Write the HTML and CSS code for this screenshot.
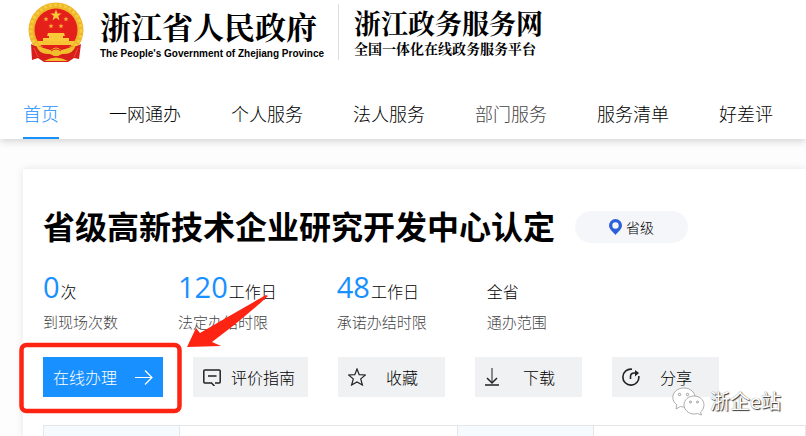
FILE: index.html
```
<!DOCTYPE html>
<html lang="zh-CN">
<head>
    <meta charset="utf-8">
    <title>浙江政务服务网</title>
    <link rel="stylesheet" href="styles.css">
</head>
<body>
    <header class="header">
        <div class="brand">
            <svg class="emblem" viewBox="0 0 56 60" aria-hidden="true">
                <circle cx="28" cy="28" r="27.5" fill="#eeb62a"/>
                <circle cx="28" cy="28" r="25" fill="none" stroke="#f6cb3c" stroke-width="3" stroke-dasharray="3 2"/>
                <circle cx="28" cy="28" r="21.5" fill="#e5201b"/>
                <path d="M28 7.500l1.500 4h4l-3.200 2.600 1.200 4.200-3.500-2.500-3.500 2.500 1.200-4.200-3.200-2.600h4z" fill="#f9c93a"/>
                <path id="star" d="M18 14.500l.7 1.700h1.800l-1.400 1.200.5 1.800-1.600-1-1.600 1 .5-1.800-1.400-1.200h1.800z" fill="#f5b433"/>
                <use href="#star" x="20"/>
                <use href="#star" x="5" y="7"/>
                <use href="#star" x="15" y="7"/>
                <path d="M20 31h16l1 3h-2v2h6v3H15v-3h6v-2h-2z" fill="#f9c93a"/>
                <path d="M9 39h38l-2 4H11z" fill="#f7c436"/>
                <path d="M3 42l4 2 10 1 11 3 11-3 10-1 4-2-2 15-5-1-6 4H16l-6-4-6 2z" fill="#d81e1b"/>
                <path d="M6 46l4 9M50 46l-4 9" stroke="#f04a38" stroke-width="1" fill="none"/>
                <path d="M8 43q9 4 15 5 5-5 10 0 6-1 15-5-3 10-14 9l-4 2h-4l-4-2q-11 1-14-9z" fill="#f2bd2c"/>
                <path d="M23 49q5-4 10 0" stroke="#d81e1b" stroke-width="1" fill="none"/>
                <path d="M16 59q12-7 24 0z" fill="#f2bd2c"/>
            </svg>
            <div class="gov">
                <span class="gov-name">浙江省人民政府</span>
                <span class="gov-en">The People's Government of Zhejiang Province</span>
            </div>
            <div class="site">
                <span class="site-name">浙江政务服务网</span>
                <span class="site-sub">全国一体化在线政务服务平台</span>
            </div>
        </div>
        <nav class="nav">
            <a href="#" class="active">首页</a>
            <a href="#">一网通办</a>
            <a href="#">个人服务</a>
            <a href="#">法人服务</a>
            <a href="#" class="hover">部门服务</a>
            <a href="#">服务清单</a>
            <a href="#">好差评</a>
        </nav>
    </header>

    <main class="card">
        <div class="title-row">
            <h1>省级高新技术企业研究开发中心认定</h1>
            <span class="level">
                <svg width="13" height="16" viewBox="0 0 13 16" aria-hidden="true">
                    <path d="M6.500 0A6.500 6.500 0 0 0 0 6.500C0 10 4 13 6.500 16 9 13 13 10 13 6.500A6.500 6.500 0 0 0 6.500 0zm0 3.300a3.200 3.200 0 1 1 0 6.400 3.200 3.200 0 0 1 0-6.400z" fill="#2b5fdc"/>
                </svg>
                省级
            </span>
        </div>

        <div class="stats">
            <div class="stat">
                <div class="value"><b>0</b>次</div>
                <div class="label">到现场次数</div>
            </div>
            <div class="stat">
                <div class="value"><b>120</b>工作日</div>
                <div class="label">法定办结时限</div>
            </div>
            <div class="stat">
                <div class="value"><b>48</b>工作日</div>
                <div class="label">承诺办结时限</div>
            </div>
            <div class="stat">
                <div class="value">全省</div>
                <div class="label">通办范围</div>
            </div>
        </div>

        <div class="actions">
            <button type="button" class="btn primary">
                在线办理
                <svg width="18" height="18" viewBox="0 0 18 18" aria-hidden="true"><path d="M0 9.500h17M10 2.500l7 7-7 7"/></svg>
            </button>
            <button type="button" class="btn guide">
                <svg width="18" height="18" viewBox="0 0 18 18" aria-hidden="true"><path d="M8 15H1.800q-1 0-1-1V3q0-1 1-1h14.400q1 0 1 1v11q0 1-1 1H12M8 14.500l3.500 3.500M5 8h8.500" stroke-width="1.500"/></svg>
                评价指南
            </button>
            <button type="button" class="btn">
                <svg width="18" height="18" viewBox="0 0 18 18" aria-hidden="true"><path d="M9 1l2.200 5.600 6.300.4-4.800 3.900 1.700 6.100L9 14l-5.400 3 1.700-6.100L.5 7l6.300-.4z"/></svg>
                收藏
            </button>
            <button type="button" class="btn">
                <svg width="18" height="18" viewBox="0 0 18 18" aria-hidden="true"><path d="M7 0v15" stroke="#666" stroke-width="1.500"/><path d="M2 10l5 5 5-5M0 17h14" stroke-width="1.500"/></svg>
                下载
            </button>
            <button type="button" class="btn">
                <svg width="18" height="18" viewBox="0 0 18 18" aria-hidden="true"><path d="M10 1.200A8 8 0 1 0 16.800 8M8.500 11V8.500q0-3.500 4-3.500h3" stroke-width="1.600"/><path d="M13 2l4 3-4 3.500z" fill="#222" stroke="none"/></svg>
                分享
            </button>
        </div>

        <table class="info">
            <tr><th></th><td></td><th></th><td></td></tr>
        </table>
    </main>

    <!-- red marker around the apply button -->
    <svg class="marker" viewBox="0 0 260 130" aria-hidden="true">
        <rect x="6.500" y="60" width="158" height="66" rx="5" fill="none" stroke="#fe2413" stroke-width="4.500"/>
        <path d="M172 62l9-19 4 5q34-20 66-38l2 1q-27 25-56 46l9 4z" fill="#fe2413"/>
    </svg>

    <div class="watermark">
        <svg width="33" height="29" viewBox="0 0 33 29" aria-hidden="true">
            <path d="M12 1C5.500 1 .8 5.200.8 10.500c0 3 1.500 5.500 4 7.200L4 22l4.500-2.500q2 .5 4 .5C18 20 23 16 23 10.500 23 5 18 1 12 1z"/>
            <path d="M22 9c-5.500 0-10 3.800-10 8.800S16.500 27 22 27q2 0 3.500-.5L29.500 28l-1-3c2-1.500 3.500-4 3.500-7.200C32 12.800 27.500 9 22 9z"/>
            <g class="eyes"><circle cx="7.500" cy="7.500" r="1.200"/><circle cx="15.500" cy="7.500" r="1.200"/><circle cx="18.500" cy="15" r="1"/><circle cx="25.500" cy="15" r="1"/></g>
        </svg>
        浙企e站
    </div>
</body>
</html>
```
FILE: styles.css
```
* {
    box-sizing: border-box;
}

body {
    margin: 0;
    background-color: #fdfdfd;
    color: #000;
    font-family: "Noto Sans CJK SC", sans-serif;
    font-weight: 300;
    overflow-x: hidden;
    position: relative;
}

.header {
    background-color: #fff;
    padding-left: 23px;
    box-shadow: 0 2px 8px rgba(0, 0, 0, 0.18);
}

.brand {
    display: flex;
    padding: 2px 0 0 5px;
    height: 90px;
}

.emblem {
    width: 56px;
    height: 60px;
    margin-right: 16px;
}

.gov, .site {
    display: flex;
    flex-direction: column;
    white-space: nowrap;
    font-family: "Noto Serif CJK SC", "Noto Sans CJK SC", serif;
    font-weight: 700;
}

.gov {
    padding-top: 6px;
}

.gov-name {
    font-size: 31px;
    line-height: 36px;
}

.gov-en {
    font-family: "Liberation Sans", sans-serif;
    font-size: 10px;
    line-height: 20px;
}

.site {
    height: 56px;
    margin: 2px 0 0 14px;
    padding: 3px 0 0 15px;
    border-left: 1px solid #ddd;
}

.site-name {
    font-size: 27px;
    line-height: 32px;
}

.site-sub {
    font-size: 14px;
    line-height: 18px;
}

.nav {
    display: flex;
    gap: 50px;
}

.nav a {
    height: 49px;
    font-size: 18px;
    line-height: 46px;
    color: #000;
    text-decoration: none;
    white-space: nowrap;
}

.nav .active {
    color: #1890ff;
    border-bottom: 2px solid #1890ff;
}

.nav .hover {
    color: #444;
}

.card {
    margin: 30px 0 0 23px;
    padding: 38px 0 0 20px;
    background-color: #fff;
    box-shadow: 0 0 8px rgba(0, 0, 0, 0.1);
}

.title-row {
    display: flex;
    align-items: center;
    gap: 20px;
}

h1 {
    margin: 0;
    padding-bottom: 4px;
    font-size: 32px;
    line-height: 36px;
    white-space: nowrap;
}

.level {
    display: flex;
    align-items: center;
    justify-content: center;
    gap: 4px;
    width: 113px;
    height: 32px;
    border-radius: 16px;
    background-color: #f4f6f9;
    font-size: 14px;
    color: #000;
}

.stats {
    display: flex;
    gap: 60px;
    margin-top: 18px;
    white-space: nowrap;
}

.value {
    display: flex;
    align-items: baseline;
    height: 46px;
    font-size: 16px;
    line-height: 44px;
}

/* keeps the baseline equal in columns without a number */
.value::before {
    content: "";
    height: 33px;
}

.value b {
    margin-right: 1px;
    font-family: "Open Sans", sans-serif;
    font-size: 29px;
    font-weight: 400;
    color: #1890ff;
}

.label {
    font-size: 15px;
    line-height: 22px;
    color: #444;
}

.actions {
    display: flex;
    gap: 30px;
    margin-top: 24px;
}

.btn {
    display: flex;
    align-items: center;
    gap: 20px;
    height: 40px;
    padding: 0 27px 0 10px;
    border: none;
    background-color: #f0f1f3;
    color: #000;
    font: inherit;
    font-size: 16px;
    white-space: nowrap;
    cursor: pointer;
}

.btn svg {
    fill: none;
    stroke: #222;
    stroke-width: 1.2;
}

.btn.guide {
    gap: 10px;
    padding-right: 13px;
}

.btn.primary {
    padding-right: 10px;
    gap: 18px;
    background-color: #1890ff;
    color: #fff;
}

.btn.primary svg {
    stroke: #fff;
}

.info {
    width: 100%;
    margin-top: 28px;
    border-collapse: collapse;
    table-layout: fixed;
}

.info th, .info td {
    height: 10px;
    padding: 0;
    border: 1px solid #e4e6e8;
    border-bottom: none;
}

.info th {
    width: 136px;
    background-color: #f5faff;
}

.info td:nth-child(2) {
    width: 278px;
}

.marker {
    position: absolute;
    left: 15px;
    top: 285px;
    width: 260px;
    height: 130px;
    pointer-events: none;
}

.watermark {
    position: absolute;
    left: 672px;
    top: 386px;
    display: flex;
    align-items: center;
    gap: 5px;
    font-size: 20px;
    line-height: 30px;
    font-weight: 400;
    color: #fff;
    text-shadow: 1px 1px 1px #333, 0 0 1px #777;
}

.watermark svg {
    fill: #fff;
    stroke: #999;
    stroke-width: 0.8;
}

.watermark .eyes {
    fill: #fff;
    stroke: #888;
}
```
